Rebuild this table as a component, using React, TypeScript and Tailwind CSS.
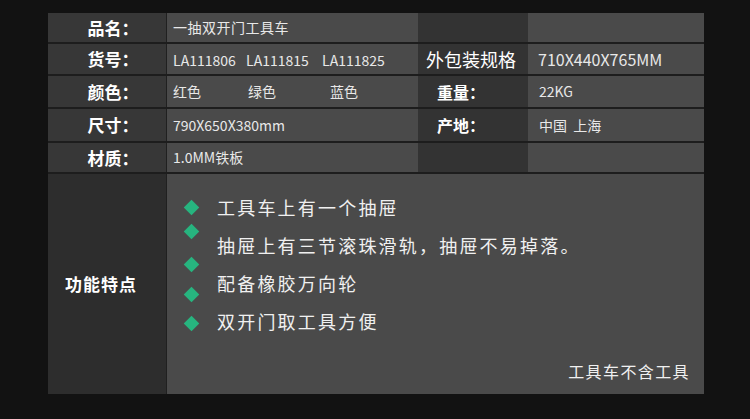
import React from 'react';

const font = { fontFamily: '"Noto Sans CJK SC", "Noto Sans", sans-serif' };

const Label: React.FC<{ children: React.ReactNode }> = ({ children }) => (
  <div className="flex items-center justify-center bg-[#373737] pl-[12px] text-[17px] font-bold text-white">{children}</div>
);

const Value: React.FC<{ children?: React.ReactNode; className?: string }> = ({ children, className = '' }) => (
  <div className={`flex items-center border-l border-[#202020] bg-[#4a4a4a] pl-[6px] text-[14px] text-[#e8e8e8] ${className}`}>{children}</div>
);

const SideLabel: React.FC<{ children?: React.ReactNode; className?: string }> = ({ children, className = '' }) => (
  <div className={`flex items-center bg-[#333333] text-white ${className}`}>{children}</div>
);

const SideValue: React.FC<{ children?: React.ReactNode; className?: string }> = ({ children, className = '' }) => (
  <div className={`flex items-center bg-[#4a4a4a] pl-[10px] text-[#e8e8e8] ${className}`}>{children}</div>
);

const features = [
  '工具车上有一个抽屉',
  '抽屉上有三节滚珠滑轨，抽屉不易掉落。',
  '配备橡胶万向轮',
  '双开门取工具方便',
];

// bullet spacing inside the feature cell (they don't line up with the text in the original)
const bulletTops = ['mt-[28px]', 'mt-[13px]', 'mt-[22px]', 'mt-[19px]', 'mt-[18px]'];

const App: React.FC = () => {
  return (
    <div className="h-[419px] w-[750px] overflow-hidden bg-[#121212] pl-[48px] pt-[13px]" style={font}>
      <div className="flex w-[656px] flex-col gap-y-[2px] bg-[#1d1d1d]">
        <div className="grid h-[29px] grid-cols-[118px_252px_110px_176px]">
          <Label>品名：</Label>
          <Value className="tracking-[0.5px]">一抽双开门工具车</Value>
          <SideLabel />
          <SideValue />
        </div>
        <div className="grid h-[30px] grid-cols-[118px_252px_110px_176px]">
          <Label>货号：</Label>
          <Value className="pt-[2px]">
            <span className="w-[73px]">LA111806</span>
            <span className="w-[76px]">LA111815</span>
            <span>LA111825</span>
          </Value>
          <SideLabel className="pl-[8px] text-[18px]">外包装规格</SideLabel>
          <SideValue className="text-[16px]">710X440X765MM</SideValue>
        </div>
        <div className="grid h-[31px] grid-cols-[118px_252px_110px_176px]">
          <Label>颜色：</Label>
          <Value>
            <span className="w-[75px]">红色</span>
            <span className="w-[82px]">绿色</span>
            <span>蓝色</span>
          </Value>
          <SideLabel className="pl-[19px] text-[16px] font-bold">重量：</SideLabel>
          <SideValue className="pl-[11px] text-[14px]">22KG</SideValue>
        </div>
        <div className="grid h-[32px] grid-cols-[118px_252px_110px_176px]">
          <Label>尺寸：</Label>
          <Value>790X650X380mm</Value>
          <SideLabel className="pl-[19px] text-[16px] font-bold">产地：</SideLabel>
          <SideValue className="pl-[11px] text-[14px]">
            <span className="whitespace-pre">中国  上海</span>
          </SideValue>
        </div>
        <div className="grid h-[29px] grid-cols-[118px_252px_110px_176px]">
          <Label>材质：</Label>
          <Value>1.0MM铁板</Value>
          <SideLabel />
          <SideValue />
        </div>

        {/* feature row */}
        <div className="grid h-[220px] grid-cols-[118px_1fr]">
          <div className="flex items-center justify-center bg-[#2d2d2d] pr-[12px] text-[17px] font-bold tracking-[1px] text-white">
            功能特点
          </div>
          <div className="flex flex-col border-l border-[#202020] bg-[#4a4a4a]">
            <div className="flex flex-1">
              <div className="flex w-[50px] flex-col items-center pr-[2px]">
                {bulletTops.map((t, i) => (
                  <div key={i} className={`h-[11px] w-[11px] shrink-0 rotate-45 bg-[#27b47f] ${t}`} />
                ))}
              </div>
              <div className="flex flex-col gap-y-[14px] pt-[21px] text-[18px] leading-[24px] tracking-[2.2px] text-[#f0f0f0]">
                {features.map((f) => (
                  <div key={f}>{f}</div>
                ))}
              </div>
            </div>
            <div className="self-end pb-[11px] pr-[14px] text-[16px] tracking-[1.4px] text-[#f0f0f0]">工具车不含工具</div>
          </div>
        </div>
      </div>
    </div>
  );
};

export default App;
